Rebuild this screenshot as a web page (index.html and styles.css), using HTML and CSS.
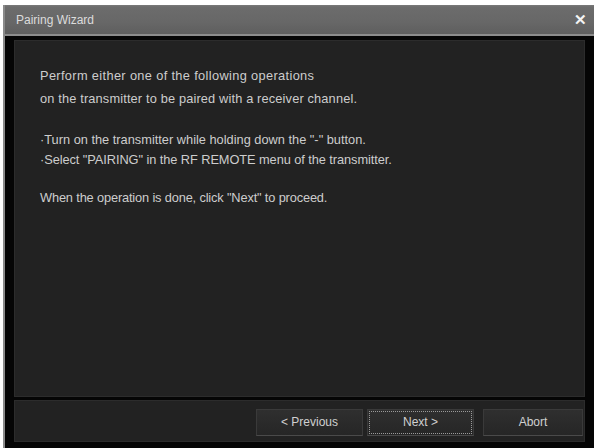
FILE: index.html
```html
<!DOCTYPE html>
<html>
<head>
<meta charset="utf-8">
<link rel="stylesheet" href="styles.css">
</head>
<body>
<div class="window">
  <div class="titlebar">
    <span class="title">Pairing Wizard</span>
    <span class="close">&#x2715;</span>
  </div>
  <div class="frame">
    <div class="content">
      <p class="para"><span class="wide">Perform either one of the following operations</span><br><span class="semi">on the transmitter to be paired with a receiver channel.</span></p>
      <p class="bullets">·Turn on the transmitter while holding down the "-" button.<br><span class="tight">·Select "PAIRING" in the RF REMOTE menu of the transmitter.</span></p>
      <p class="final">When the operation is done, click "Next" to proceed.</p>
    </div>
    <div class="footer">
      <button class="btn btn-prev">&lt; Previous</button>
      <button class="btn btn-next">Next &gt;</button>
      <button class="btn btn-abort">Abort</button>
    </div>
  </div>
</div>
</body>
</html>
```
FILE: styles.css
```css
html, body {
  margin: 0;
  padding: 0;
  background: #ffffff;
  width: 595px;
  height: 448px;
  overflow: hidden;
}
.window {
  margin: 5px 1px 0 3px;
  height: 443px;
  display: flex;
  flex-direction: column;
  background: #050505;
  border-left: 2px solid #8a8a8a;
  font-family: "Liberation Sans", Arial, sans-serif;
}
.titlebar {
  height: 29px;
  flex: none;
  display: flex;
  align-items: center;
  justify-content: space-between;
  padding: 0 7px 0 11px;
  background: linear-gradient(#7a7a7a 0, #6c6c6c 2px, #676767 60%, #5e5e5e 100%);
  border-bottom: 2px solid #8c8c8c;
}
.title {
  color: #dcdcdc;
  font-size: 12px;
}
.close {
  color: #f4f4f4;
  font-size: 15px;
  font-weight: bold;
  line-height: 1;
}
.frame {
  flex: 1;
  display: flex;
  flex-direction: column;
  gap: 3px;
  padding: 4px 9px 6px 9px;
}
.content {
  flex: 1;
  background: #222222;
  border: 1px solid #2c2c2c;
  padding: 23px 24px 0 25px;
  color: #cdcdcd;
  font-size: 12.8px;
}
.content p {
  margin: 0;
}
.wide {
  letter-spacing: 0.35px;
}
.semi {
  letter-spacing: 0.15px;
}
.tight {
  letter-spacing: -0.07px;
}
.para {
  line-height: 23px;
}
.bullets {
  margin-top: 20px !important;
  line-height: 20px;
}
.final {
  margin-top: 18px !important;
  line-height: 20px;
  letter-spacing: -0.15px;
}
.footer {
  height: 40px;
  flex: none;
  background: #222222;
  border: 1px solid #2c2c2c;
  display: flex;
  align-items: center;
  justify-content: flex-end;
  padding: 0 1px 0 0;
}
.btn {
  height: 27px;
  margin-top: 2px;
  background: linear-gradient(#2f2f2f, #262626);
  border: 1px solid #3a3a3a;
  border-bottom-color: #4a4a4a;
  color: #d0d0d0;
  font-family: "Liberation Sans", Arial, sans-serif;
  font-size: 12px;
  padding: 0;
}
.btn-prev {
  width: 107px;
}
.btn-next {
  width: 107px;
  margin-left: 4px;
  outline: 1px dotted #9a9a9a;
  outline-offset: -3px;
}
.btn-abort {
  width: 100px;
  margin-left: 9px;
}
```
